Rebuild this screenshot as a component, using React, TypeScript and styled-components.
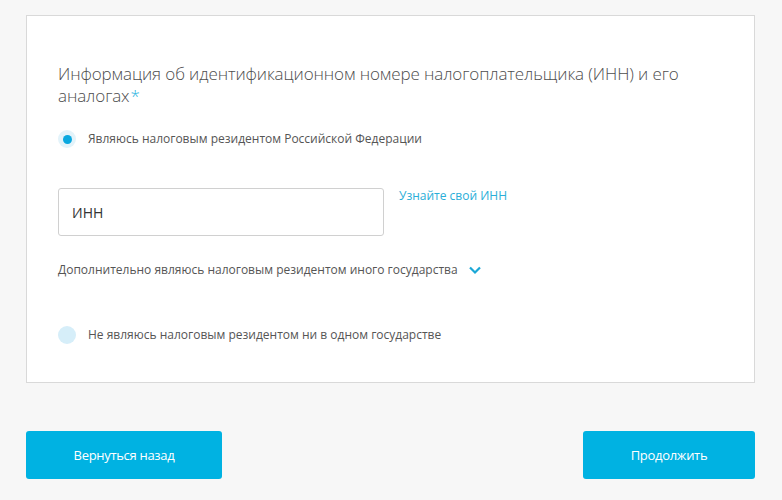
import React from "react";
import styled, { createGlobalStyle } from "styled-components";

const Global = createGlobalStyle`
  html, body { margin: 0; padding: 0; background: #f7f7f7; }
  body { font-family: "Open Sans", "Liberation Sans", sans-serif; }
  * { box-sizing: border-box; }
`;

const Page = styled.div`
  width: 782px;
  height: 500px;
  padding: 15px 27px 0 26px;
  display: flex;
  flex-direction: column;
`;

const Card = styled.section`
  background: #fff;
  border: 1px solid #d9d9d9;
  height: 368px;
  padding: 47px 31px 0 31px;
  display: flex;
  flex-direction: column;
`;

const Title = styled.h2`
  margin: 0;
  font-size: 17px;
  font-weight: 300;
  line-height: 22px;
  color: #4d4d4d;
  letter-spacing: -0.1px;
`;

const Star = styled.span`
  display: inline-block;
  margin-left: 1px;
  color: #2ab3e0;
`;

const RadioRow = styled.label<{ $mt: number }>`
  display: flex;
  align-items: center;
  gap: 12px;
  margin-top: ${(p) => p.$mt}px;
  font-size: 12px;
  color: #555;
  line-height: 18px;
`;

const RadioDot = styled.span<{ $checked?: boolean }>`
  width: 18px;
  height: 18px;
  border-radius: 50%;
  background: ${(p) => (p.$checked ? "#e3f3fa" : "#d6eef9")};
  display: flex;
  align-items: center;
  justify-content: center;
  flex: none;
  &::after {
    content: "";
    width: 9px;
    height: 9px;
    border-radius: 50%;
    background: #0aa8df;
    display: ${(p) => (p.$checked ? "block" : "none")};
  }
`;

const InnRow = styled.div`
  display: flex;
  align-items: flex-start;
  gap: 15px;
  margin-top: 40px;
`;

const Input = styled.div`
  width: 326px;
  height: 48px;
  border: 1px solid #d0d0d0;
  border-radius: 3px;
  padding: 0 13px;
  display: flex;
  align-items: center;
  font-size: 14px;
  color: #333;
`;

const Link = styled.a`
  font-size: 12px;
  color: #2aaed8;
  margin-top: -1px;
  line-height: 18px;
  text-decoration: none;
`;

const Extra = styled.div`
  display: flex;
  align-items: center;
  gap: 10px;
  margin-top: 25px;
  font-size: 12px;
  color: #555;
  line-height: 18px;
`;

const Footer = styled.div`
  display: flex;
  justify-content: space-between;
  margin-top: 48px;
`;

const Button = styled.button<{ $w: number }>`
  width: ${(p) => p.$w}px;
  height: 48px;
  background: #00b2e2;
  border: none;
  border-radius: 3px;
  color: #fff;
  font-family: "Open Sans", sans-serif;
  font-size: 13px;
  font-weight: 500;
  letter-spacing: -0.3px;
`;

export default function App() {
  return (
    <>
      <Global />
      <Page>
        <Card>
          <Title>
            Информация об идентификационном номере налогоплательщика (ИНН) и его аналогах
            <Star>*</Star>
          </Title>
          <RadioRow $mt={23}>
            <RadioDot $checked />
            Являюсь налоговым резидентом Российской Федерации
          </RadioRow>
          <InnRow>
            <Input>ИНН</Input>
            <Link>Узнайте свой ИНН</Link>
          </InnRow>
          <Extra>
            Дополнительно являюсь налоговым резидентом иного государства
            <svg width="14" height="10" viewBox="0 0 14 10">
              <path d="M2 2.5 L7 7.5 L12 2.5" fill="none" stroke="#1aa7d6" strokeWidth="2.2" />
            </svg>
          </Extra>
          <RadioRow $mt={47}>
            <RadioDot />
            Не являюсь налоговым резидентом ни в одном государстве
          </RadioRow>
        </Card>
        <Footer>
          <Button $w={196}>Вернуться назад</Button>
          <Button $w={172}>Продолжить</Button>
        </Footer>
      </Page>
    </>
  );
}
